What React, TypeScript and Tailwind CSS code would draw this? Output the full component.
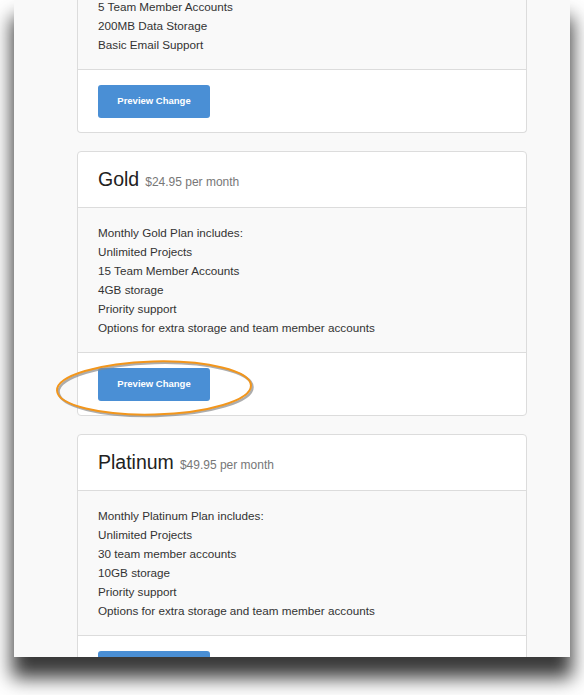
import React from 'react'

type Plan = {
  name: string
  price: string
  lines: string[]
}

const plans: Plan[] = [
  {
    name: 'Gold',
    price: '$24.95 per month',
    lines: [
      'Monthly Gold Plan includes:',
      'Unlimited Projects',
      '15 Team Member Accounts',
      '4GB storage',
      'Priority support',
      'Options for extra storage and team member accounts',
    ],
  },
  {
    name: 'Platinum',
    price: '$49.95 per month',
    lines: [
      'Monthly Platinum Plan includes:',
      'Unlimited Projects',
      '30 team member accounts',
      '10GB storage',
      'Priority support',
      'Options for extra storage and team member accounts',
    ],
  },
]

const CardFooter = () => (
  <div className="h-[62px] px-5 pt-[15px]">
    <button className="w-[112px] h-[33px] rounded-[3px] bg-[#4a8fd5] text-white text-[9.5px] font-bold">
      Preview Change
    </button>
  </div>
)

// top card is scrolled out of view, only its last rows show
const PartialCard = () => (
  <div className="w-[450px] mb-[18px] border border-t-0 border-[#dcdcdc] rounded-b-[4px] bg-white overflow-hidden">
    <div className="bg-[#f9f9f9] px-5 pb-[15px] text-[11.7px] leading-[19px] text-[#333] border-b border-[#dcdcdc]">
      <div className="leading-[14px] mb-[2px]">5 Team Member Accounts</div>
      <div>200MB Data Storage</div>
      <div>Basic Email Support</div>
    </div>
    <CardFooter />
  </div>
)

const PlanCard = ({ plan }: { plan: Plan }) => {
  return (
    <div className="w-[450px] mb-[18px] border border-[#dcdcdc] rounded-[4px] bg-white overflow-hidden">
      <div className="h-[56px] flex items-center px-5 border-b border-[#dcdcdc]">
        <div className="flex items-baseline gap-[6px]">
          <span className="text-[19.5px] text-[#222]">{plan.name}</span>
          <span className="text-[12px] text-[#777]">{plan.price}</span>
        </div>
      </div>
      <div className="bg-[#f9f9f9] px-5 py-[15px] text-[11.7px] leading-[19px] text-[#333] border-b border-[#dcdcdc]">
        {plan.lines.map((l) => (
          <div key={l}>{l}</div>
        ))}
      </div>
      <CardFooter />
    </div>
  )
}

const App = () => {
  return (
    <div className="w-[584px] h-[695px] bg-white overflow-hidden" style={{ fontFamily: '"Liberation Sans", Arial, sans-serif' }}>
      <div className="relative ml-[14px] w-[556px] h-[657px] bg-[#f9f9f9] shadow-[0_19px_18px_2px_rgba(0,0,0,0.78)]">
        <div className="h-full overflow-hidden">
          <div className="pl-[63px]">
            <PartialCard />
            {plans.map((p) => (
              <PlanCard key={p.name} plan={p} />
            ))}
          </div>
        </div>
        {/* orange highlight ring */}
        <svg className="absolute left-[38px] top-[357px]" width="204" height="62" viewBox="0 0 204 62">
          <g transform="rotate(-1.5 102 31)">
            <ellipse cx="103.5" cy="32.5" rx="97" ry="26.5" fill="none" stroke="#8a8a8a" strokeWidth="2.5" opacity="0.7" />
            <ellipse cx="102" cy="31" rx="97" ry="26.5" fill="none" stroke="#f2961c" strokeWidth="2" />
          </g>
        </svg>
      </div>
    </div>
  )
}

export default App
